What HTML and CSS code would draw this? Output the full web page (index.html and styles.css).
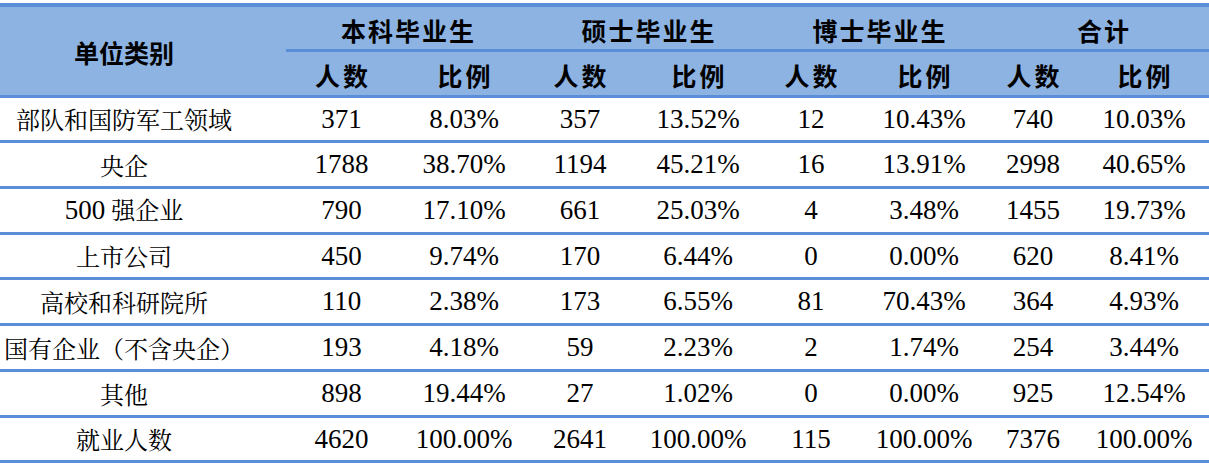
FILE: index.html
```html
<!DOCTYPE html>
<html lang="zh-CN">
<head>
<meta charset="utf-8">
<title>就业单位类别统计</title>
<link rel="stylesheet" href="styles.css">
</head>
<body>
<div class="wrap">
<table class="stats">
  <colgroup>
    <col class="c-name">
    <col class="c-n1"><col class="c-p1">
    <col class="c-n2"><col class="c-p2">
    <col class="c-n3"><col class="c-p3">
    <col class="c-n4"><col class="c-p4">
  </colgroup>
  <thead>
    <tr class="h1">
      <th class="corner" rowspan="2">单位类别</th>
      <th class="grp" colspan="2">本科毕业生</th>
      <th class="grp" colspan="2">硕士毕业生</th>
      <th class="grp" colspan="2">博士毕业生</th>
      <th class="grp" colspan="2">合计</th>
    </tr>
    <tr class="h2">
      <th class="sub">人数</th><th class="sub">比例</th>
      <th class="sub">人数</th><th class="sub">比例</th>
      <th class="sub">人数</th><th class="sub">比例</th>
      <th class="sub">人数</th><th class="sub">比例</th>
    </tr>
  </thead>
  <tbody>
    <tr class="short">
      <td class="name">部队和国防军工领域</td>
      <td>371</td><td>8.03%</td><td>357</td><td>13.52%</td><td>12</td><td>10.43%</td><td>740</td><td>10.03%</td>
    </tr>
    <tr>
      <td class="name">央企</td>
      <td>1788</td><td>38.70%</td><td>1194</td><td>45.21%</td><td>16</td><td>13.91%</td><td>2998</td><td>40.65%</td>
    </tr>
    <tr>
      <td class="name"><span class="lat">500</span> 强企业</td>
      <td>790</td><td>17.10%</td><td>661</td><td>25.03%</td><td>4</td><td>3.48%</td><td>1455</td><td>19.73%</td>
    </tr>
    <tr class="short">
      <td class="name">上市公司</td>
      <td>450</td><td>9.74%</td><td>170</td><td>6.44%</td><td>0</td><td>0.00%</td><td>620</td><td>8.41%</td>
    </tr>
    <tr>
      <td class="name">高校和科研院所</td>
      <td>110</td><td>2.38%</td><td>173</td><td>6.55%</td><td>81</td><td>70.43%</td><td>364</td><td>4.93%</td>
    </tr>
    <tr>
      <td class="name">国有企业（不含央企）</td>
      <td>193</td><td>4.18%</td><td>59</td><td>2.23%</td><td>2</td><td>1.74%</td><td>254</td><td>3.44%</td>
    </tr>
    <tr>
      <td class="name">其他</td>
      <td>898</td><td>19.44%</td><td>27</td><td>1.02%</td><td>0</td><td>0.00%</td><td>925</td><td>12.54%</td>
    </tr>
    <tr class="short">
      <td class="name">就业人数</td>
      <td>4620</td><td>100.00%</td><td>2641</td><td>100.00%</td><td>115</td><td>100.00%</td><td>7376</td><td>100.00%</td>
    </tr>
  </tbody>
</table>
</div>
</body>
</html>
```

FILE: styles.css
```css
html, body {
  margin: 0;
  padding: 0;
  background: #ffffff;
  overflow: hidden;
}

.wrap {
  width: 1209px;
  height: 465px;
  overflow: hidden;
  padding-top: 3px;
  box-sizing: border-box;
}

.stats {
  border-collapse: separate;
  border-spacing: 0;
  table-layout: fixed;
  width: 1215px;
  color: #000000;
}

.c-name { width: 286px; }
.c-n1 { width: 111px; }
.c-p1 { width: 134px; }
.c-n2 { width: 98px; }
.c-p2 { width: 138px; }
.c-n3 { width: 88px; }
.c-p3 { width: 138px; }
.c-n4 { width: 80px; }
.c-p4 { width: 142px; }

.stats th,
.stats td {
  box-sizing: border-box;
  padding: 0;
  text-align: center;
  vertical-align: middle;
  white-space: nowrap;
  border-bottom: 3px solid #5a8ed8;
}

.stats th {
  background: #8db3e2;
  font-family: "Noto Sans CJK SC", "Liberation Sans", sans-serif;
  font-weight: 700;
  font-size: 25px;
  line-height: 1;
}

.stats .h1 th {
  border-top: 4px solid #5a8ed8;
}

.stats .h1 th.grp {
  height: 49px;
  padding-top: 4px;
  letter-spacing: 2px;
}

.stats th.corner {
  padding-right: 38px;
  padding-top: 2px;
}

.stats .h2 th.sub {
  height: 46px;
  padding-top: 3px;
  letter-spacing: 3px;
  text-indent: 3px;
}

.stats td {
  height: 46px;
  font-family: "Liberation Serif", "Times New Roman", "Noto Serif CJK SC", "Noto Sans CJK SC", serif;
  font-size: 27px;
  line-height: 1;
}

.stats tr.short td {
  height: 45px;
}

.stats td.name {
  padding-right: 38px;
  font-family: "Noto Serif CJK SC", "Noto Sans CJK SC", serif;
  font-size: 24px;
}

.stats td.name .lat {
  font-family: "Liberation Serif", "Times New Roman", serif;
  font-size: 27px;
}
```
